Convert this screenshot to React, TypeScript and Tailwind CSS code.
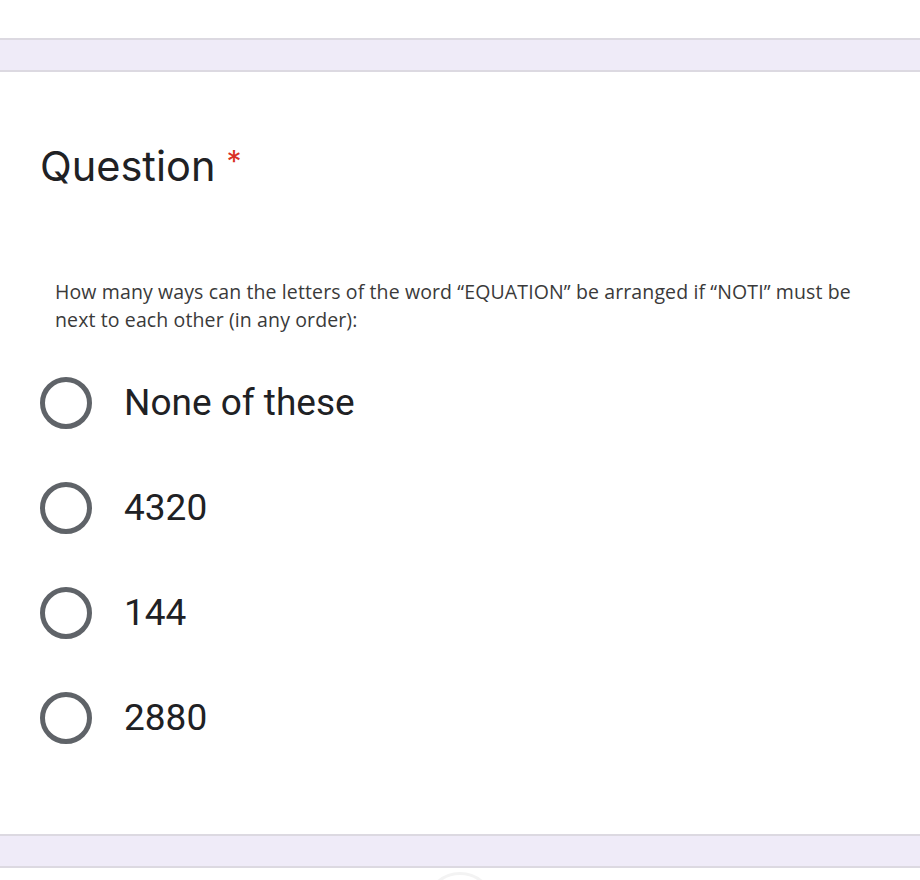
import React from "react";

const options = ["None of these", "4320", "144", "2880"];

export default function App() {
  return (
    <div className="w-[920px] h-[880px] bg-white overflow-hidden relative">
      <div className="h-[38px]" />
      <div className="h-[34px] bg-[#efebf8] border-y-2 border-[#dcd9e1]" />
      <div className="h-[762px] flex flex-col">
        <div className="pt-[70px] pl-[40px] flex items-start">
          <span className="text-[41.5px] leading-[48px] text-[#202124]" style={{ fontFamily: "Inter, sans-serif" }}>
            Question
          </span>
          <span className="ml-[11px] text-[30px] leading-[38px] text-[#d93025]" style={{ fontFamily: "Inter, sans-serif" }}>
            *
          </span>
        </div>
        <p
          className="mt-[88px] ml-[55px] w-[805px] text-[19.5px] leading-[28px] tracking-[0.12px] text-[#3a3a3a]"
          style={{ fontFamily: "'Open Sans', sans-serif" }}
        >
          How many ways can the letters of the word “EQUATION” be arranged if “NOTI” must be next to each other (in any order):
        </p>
        <div className="mt-[43px] flex flex-col gap-[53px] pl-[40px]">
          {options.map((o) => (
            <div key={o} className="flex items-center h-[52px]">
              <div className="w-[52px] h-[52px] rounded-full border-[5px] border-[#5f6368] shrink-0" />
              <span className="ml-[32px] text-[37px] text-[#202124]" style={{ fontFamily: "Roboto, sans-serif" }}>
                {o}
              </span>
            </div>
          ))}
        </div>
      </div>
      <div className="h-[34px] bg-[#efebf8] border-y-2 border-[#dcd9e1]" />
      <div className="absolute left-[425px] top-[872px] w-[70px] h-[70px] rounded-full border-[3px] border-[#f3f3f3]" />
    </div>
  );
}
